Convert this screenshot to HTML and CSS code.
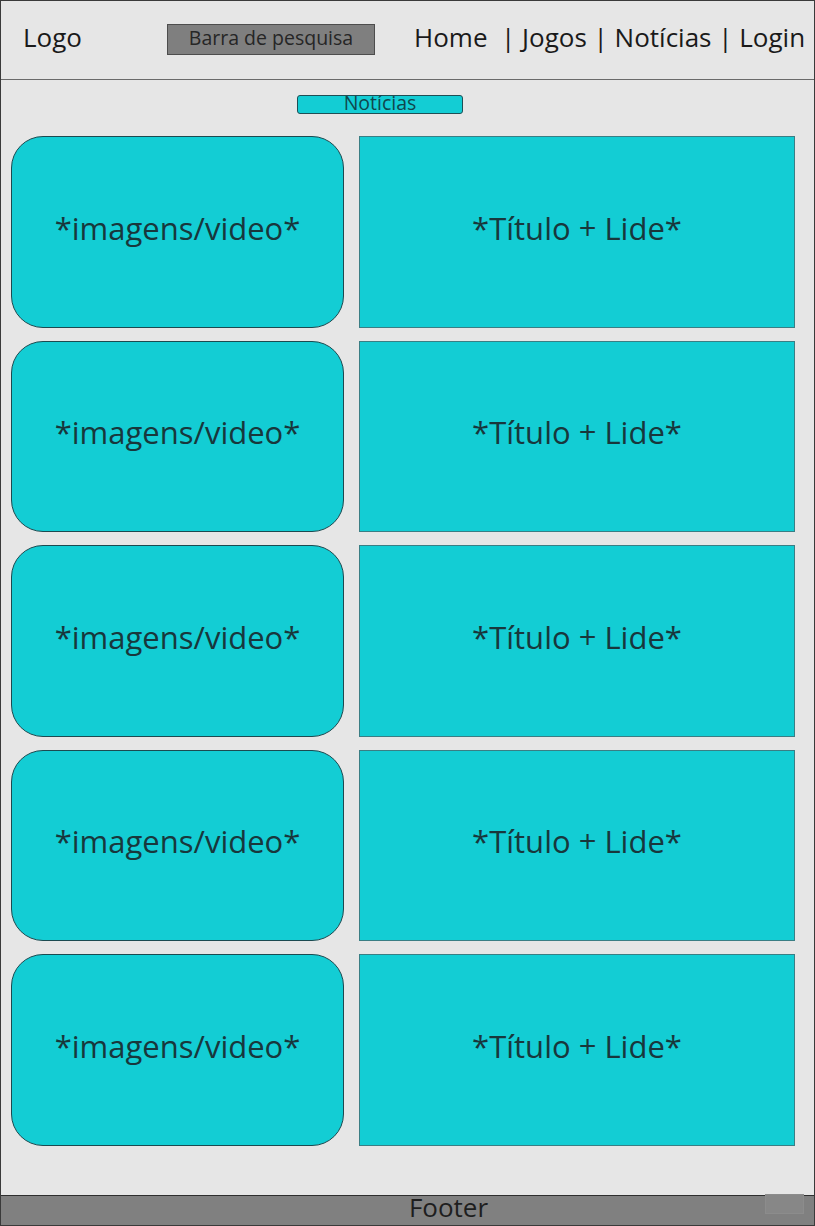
FILE: index.html
```html
<!DOCTYPE html>
<html lang="pt">
<head>
<meta charset="utf-8">
<title>Notícias</title>
<link rel="stylesheet" href="styles.css">
</head>
<body>
<div class="page">
  <header class="header">
    <div class="logo">Logo</div>
    <div class="search">Barra de pesquisa</div>
    <nav class="nav">Home  | Jogos | Notícias | Login</nav>
  </header>
  <main class="main">
    <div class="tab">Notícias</div>
    <div class="grid">
      <div class="media">*imagens/video*</div>
      <div class="story">*Título + Lide*</div>
      <div class="media">*imagens/video*</div>
      <div class="story">*Título + Lide*</div>
      <div class="media">*imagens/video*</div>
      <div class="story">*Título + Lide*</div>
      <div class="media">*imagens/video*</div>
      <div class="story">*Título + Lide*</div>
      <div class="media">*imagens/video*</div>
      <div class="story">*Título + Lide*</div>
    </div>
  </main>
  <footer class="footer">
    <span class="footer-text">Footer</span>
    <span class="footer-mark"></span>
  </footer>
</div>
</body>
</html>
```
FILE: styles.css
```css
* { box-sizing: border-box; }
html, body { margin: 0; padding: 0; }
body {
  font-family: "Open Sans", "DejaVu Sans", sans-serif;
  background: #e6e6e6;
  color: #1a1a1a;
}
.page {
  width: 815px;
  height: 1226px;
  border: 1px solid #3a3a3a;
  background: #e6e6e6;
  display: flex;
  flex-direction: column;
  position: relative;
}
.header {
  height: 79px;
  border-bottom: 1px solid #6a6a6a;
  display: flex;
  align-items: center;
  padding-bottom: 2px;
}
.logo {
  font-size: 26px;
  line-height: 30px;
  margin-left: 22px;
  width: 144px;
  color: #1a1a1a;
  margin-bottom: 5px;
}
.search {
  width: 208px;
  height: 31px;
  background: #7f7f7f;
  border: 1px solid #4d4d4d;
  font-size: 19.5px;
  color: #262626;
  display: flex;
  align-items: center;
  justify-content: center;
  padding-bottom: 3px;
  line-height: 24px;
}
.nav {
  margin-left: 39px;
  font-size: 26px;
  line-height: 30px;
  white-space: pre;
  color: #1a1a1a;
  margin-bottom: 5px;
}
.main {
  flex: 1;
  padding: 15px 0 0 10px;
}
.tab {
  margin-left: 286px;
  width: 166px;
  height: 19px;
  background: #13cdd4;
  border: 1px solid #1f4f55;
  border-radius: 3px;
  font-size: 19.5px;
  line-height: 14px;
  color: #10474d;
  text-align: center;
}
.grid {
  margin-top: 22px;
  display: grid;
  grid-template-columns: 333px 436px;
  grid-auto-rows: 191.5px;
  column-gap: 15px;
  row-gap: 13px;
}
.media, .story {
  background: #13cdd4;
  display: flex;
  align-items: center;
  justify-content: center;
  font-size: 31px;
  color: #18373c;
  padding-bottom: 8px;
}
.media {
  border: 1px solid #1c4a50;
  border-radius: 32px;
}
.story {
  border: 1px solid #3a7e84;
}
.footer {
  height: 30px;
  background: #808080;
  border-top: 1px solid #2e2e2e;
  display: flex;
  align-items: center;
  justify-content: center;
  padding-left: 82px;
  position: relative;
}
.footer-text {
  font-size: 26px;
  color: #1e1e1e;
  line-height: 28px;
  margin-top: -7px;
}
.footer-mark {
  position: absolute;
  left: 764px;
  top: -2px;
  width: 39px;
  height: 20px;
  background: #878787;
  border: 1px solid #8c8c8c;
}
```
